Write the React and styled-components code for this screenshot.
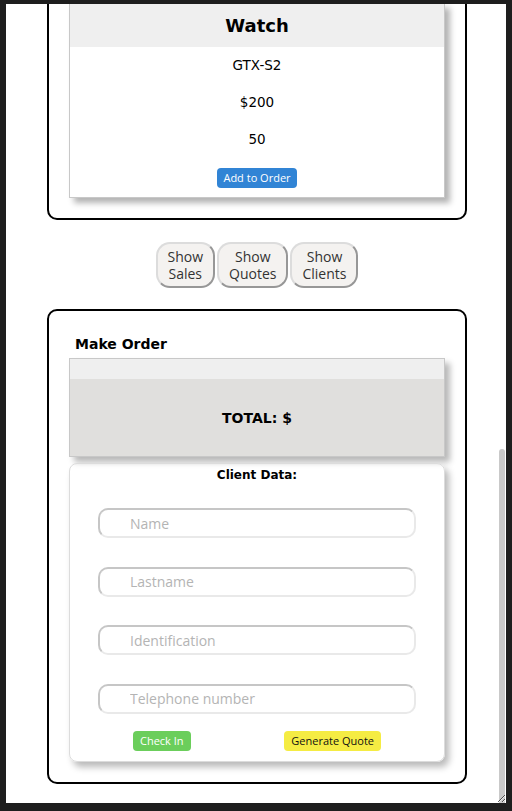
import React, { useLayoutEffect, useRef } from "react";
import styled, { createGlobalStyle } from "styled-components";

const Global = createGlobalStyle`
  html, body { margin: 0; padding: 0; background: #1e1e1e; overflow: hidden; }
  body { font-family: "DejaVu Sans", Verdana, sans-serif; color: #000; }
  * { box-sizing: border-box; }
`;

const Frame = styled.div`
  display: flex;
  width: 500px;
  height: 799px;
  margin: 4px 6px 8px;
  background: #fff;
  overflow: hidden;
  resize: vertical;
`;

const Viewport = styled.div`
  flex: 1;
  height: 100%;
  overflow-y: scroll;
  scrollbar-width: none;
  &::-webkit-scrollbar { display: none; }
`;

const Track = styled.div`
  width: 8px;
  flex: none;
  display: flex;
  flex-direction: column;
  padding: 0 1px;
`;

const Thumb = styled.div`
  margin-top: 445px;
  height: 354px;
  background: #c9c9c9;
  border-radius: 3px 3px 0 0;
`;

const Page = styled.div`
  padding: 22px 0 19px 10px;
`;

const PageTitle = styled.h1`
  margin: 0;
  height: 40px;
  line-height: 40px;
  font-size: 26px;
  text-align: center;
`;

const Panel = styled.section`
  width: 420px;
  margin: 0 auto;
  border: 2px solid #000;
  border-radius: 10px;
  padding: ${(p) => (p.$order ? "23px 20px 20px" : "20px")};
`;

const PanelTitle = styled.h2`
  margin: 0 0 ${(p) => (p.$order ? "4px" : "30px")};
  padding-left: 6px;
  font-size: 14px;
  line-height: 20px;
  font-weight: bold;
`;

const CardList = styled.div`
  display: flex;
  flex-direction: column;
  gap: 24px;
`;

const ProductCard = styled.article`
  border: 1px solid #c8c8c8;
  background: #fff;
  box-shadow: 5px 5px 6px rgba(0, 0, 0, 0.3);
  text-align: center;
`;

const CardHeader = styled.h3`
  margin: 0;
  height: 43px;
  line-height: 43px;
  background: #efefef;
  font-size: 18px;
  font-weight: bold;
`;

const CardBody = styled.div`
  display: flex;
  flex-direction: column;
  align-items: center;
  gap: 20px;
  padding: 10px 0 9px;
`;

const CardText = styled.p`
  margin: 0;
  font-size: 13.5px;
  line-height: 17px;
`;

const SmallButton = styled.button`
  font-family: "Open Sans", "Noto Sans", sans-serif;
  font-size: 11px;
  height: 20px;
  padding: 0 7px;
  border: none;
  border-radius: 4px;
  background: ${(p) => p.$bg};
  color: ${(p) => p.$fg};
  line-height: 20px;
  cursor: pointer;
`;

const AddButton = styled(SmallButton)`
  margin-top: -0.5px;
  padding: 0 6.5px;
`;

const ToggleRow = styled.div`
  display: flex;
  justify-content: center;
  gap: 2px;
  margin: 22px 0 21px;
`;

const ToggleButton = styled.button`
  font-family: "Open Sans", "Noto Sans", sans-serif;
  font-size: 14px;
  line-height: 17px;
  color: #333;
  background: #f4f2f0;
  padding: 4px 10px;
  height: 46px;
  border: 2px solid;
  border-color: #dcdcdc #979797 #979797 #dcdcdc;
  border-radius: 14px;
  cursor: pointer;
`;

const OrderBox = styled.div`
  border: 1px solid #c8c8c8;
  box-shadow: 5px 5px 6px rgba(0, 0, 0, 0.28);
`;

const OrderHead = styled.div`
  height: 20px;
  background: #efefef;
`;

const OrderTotal = styled.div`
  height: 77px;
  background: #e0dfdd;
  display: flex;
  align-items: center;
  justify-content: center;
  font-weight: bold;
  font-size: 14px;
  padding-top: 2px;
`;

const ClientCard = styled.form`
  margin-top: 6px;
  border: 1px solid #dcdcdc;
  border-radius: 8px;
  box-shadow: 4px 5px 7px rgba(0, 0, 0, 0.28);
  padding: 4px 28px 10px;
  display: flex;
  flex-direction: column;
`;

const ClientTitle = styled.h4`
  margin: 0;
  text-align: center;
  font-size: 12px;
  line-height: 15px;
  font-weight: bold;
`;

const Fields = styled.div`
  display: flex;
  flex-direction: column;
  gap: 28.5px;
  margin-top: 25.5px;
`;

const Field = styled.input`
  height: 30px;
  width: 100%;
  border: 2px solid;
  border-color: #c6c6c6 #e9e9e9 #e9e9e9 #c6c6c6;
  border-radius: 10px;
  padding: 0 0 0 30px;
  font-family: "Open Sans", "Noto Sans", sans-serif;
  font-size: 14px;
  background: #fff;
  outline: none;
  &::placeholder { color: #b4b4b4; }
`;

const Actions = styled.div`
  display: flex;
  justify-content: space-between;
  padding: 0 35px;
  margin-top: 17.5px;
`;

const products = [
  { name: "Phone", model: "XPZ-10", price: 500, stock: 20 },
  { name: "Laptop", model: "LNV-T4", price: 1200, stock: 8 },
  { name: "Headphones", model: "SNY-H9", price: 150, stock: 35 },
  { name: "Tablet", model: "IPD-M2", price: 650, stock: 12 },
  { name: "Watch", model: "GTX-S2", price: 200, stock: 50 },
];

export default function App() {
  const ref = useRef(null);
  useLayoutEffect(() => {
    if (ref.current) ref.current.scrollTop = ref.current.scrollHeight;
  }, []);

  return (
    <>
      <Global />
      <Frame>
        <Viewport ref={ref}>
          <Page>
            <PageTitle>Store</PageTitle>
            <Panel>
              <PanelTitle>Products</PanelTitle>
              <CardList>
                {products.map((p) => (
                  <ProductCard key={p.model}>
                    <CardHeader>{p.name}</CardHeader>
                    <CardBody>
                      <CardText>{p.model}</CardText>
                      <CardText>${p.price}</CardText>
                      <CardText>{p.stock}</CardText>
                      <AddButton type="button" $bg="#3184d5" $fg="#fff">
                        Add to Order
                      </AddButton>
                    </CardBody>
                  </ProductCard>
                ))}
              </CardList>
            </Panel>

            <ToggleRow>
              <ToggleButton type="button">Show<br />Sales</ToggleButton>
              <ToggleButton type="button">Show<br />Quotes</ToggleButton>
              <ToggleButton type="button">Show<br />Clients</ToggleButton>
            </ToggleRow>

            <Panel $order>
              <PanelTitle $order>Make Order</PanelTitle>
              <OrderBox>
                <OrderHead />
                <OrderTotal>TOTAL: $</OrderTotal>
              </OrderBox>
              <ClientCard onSubmit={(e) => e.preventDefault()}>
                <ClientTitle>Client Data:</ClientTitle>
                <Fields>
                  <Field placeholder="Name" />
                  <Field placeholder="Lastname" />
                  <Field placeholder="Identification" />
                  <Field placeholder="Telephone number" />
                </Fields>
                <Actions>
                  <SmallButton type="button" $bg="#6bce5b" $fg="#fff">Check In</SmallButton>
                  <SmallButton type="button" $bg="#f5ec43" $fg="#111">Generate Quote</SmallButton>
                </Actions>
              </ClientCard>
            </Panel>
          </Page>
        </Viewport>
        <Track>
          <Thumb />
        </Track>
      </Frame>
    </>
  );
}
